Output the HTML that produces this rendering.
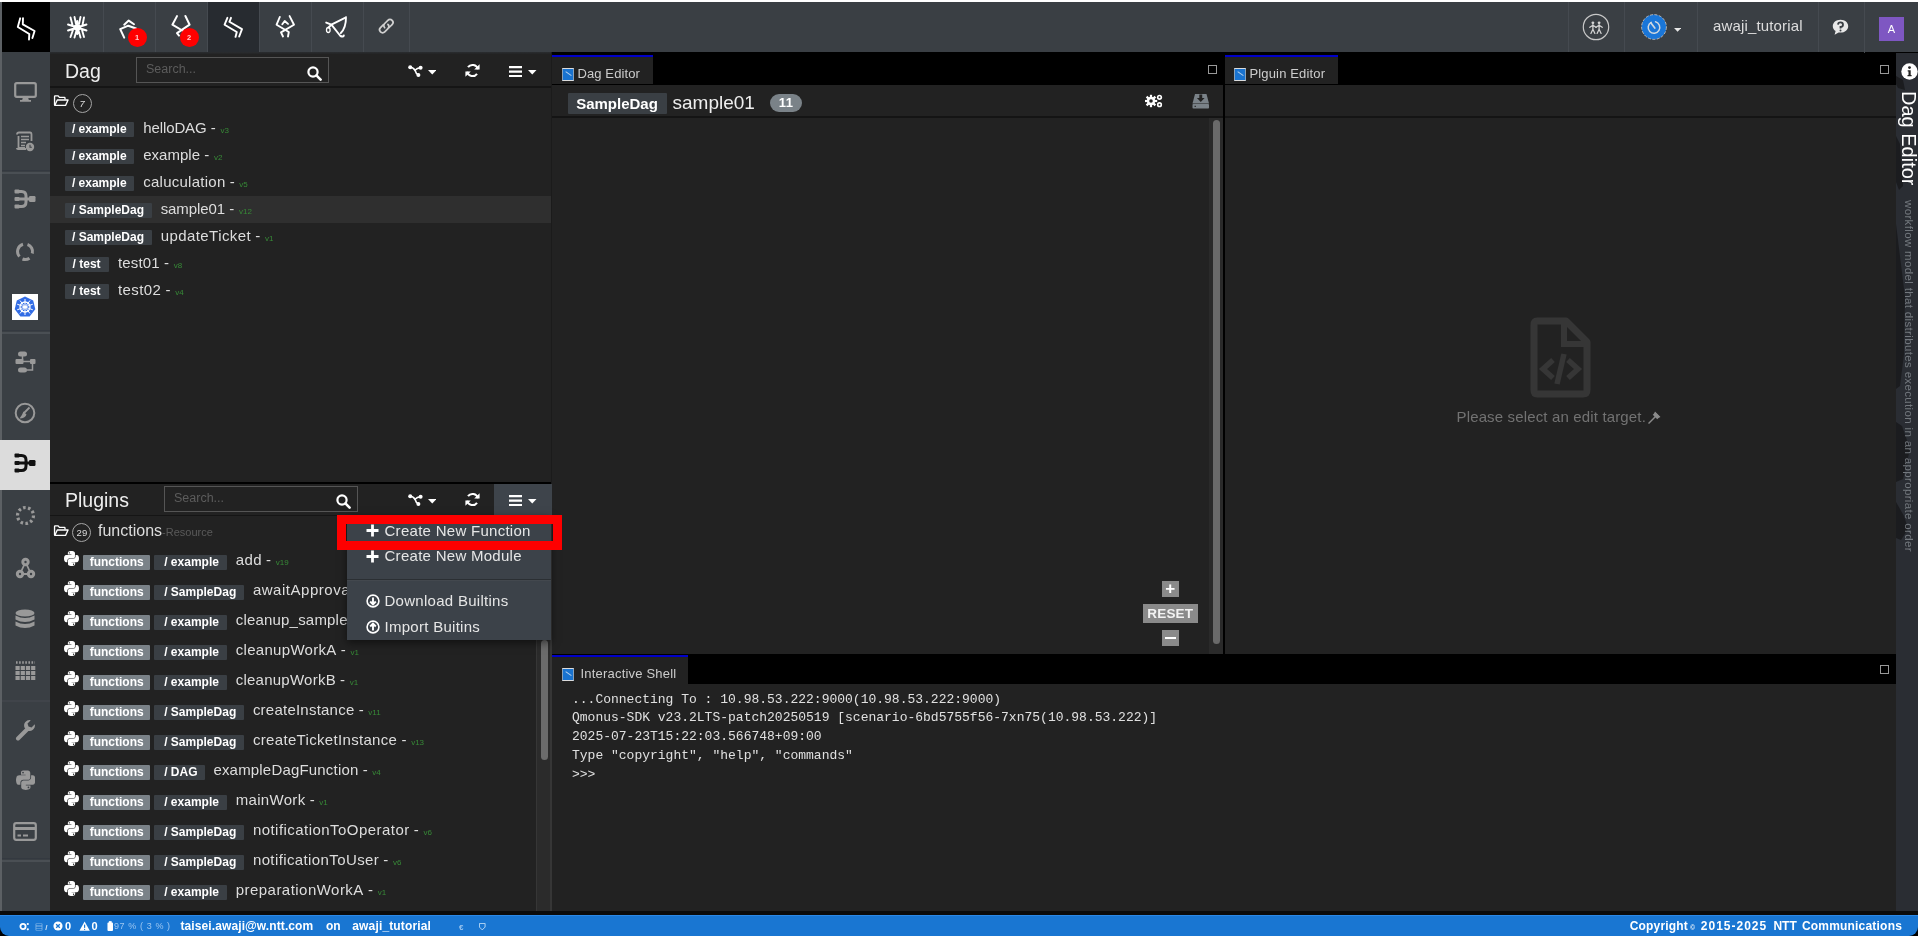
<!DOCTYPE html>
<html lang="en">
<head>
<meta charset="utf-8">
<title>Qmonus SDK - Dag Editor</title>
<style>
*{box-sizing:border-box;margin:0;padding:0}
html,body{width:1920px;height:936px;overflow:hidden;background:#fff;font-family:"Liberation Sans","Noto Sans CJK JP",sans-serif;color:#ddd}
#app{position:absolute;left:0;top:0;width:1920px;height:936px;background:#000;overflow:hidden;will-change:transform}
#app div,#app span.a,#app svg.a,#app pre{position:absolute}
.bw{background:#fff}
#topbar{left:0;top:2px;width:1918px;height:50px;background:#3a3f44}
#logo{left:2px;top:2px;width:48px;height:50px;background:#000}
.tdiv{top:2px;width:1px;height:50px;background:#454a50}
.tact{top:2px;height:50px;background:#272b30}
.badge{width:19px;height:19px;border-radius:50%;background:#f00;color:#ffd0d0;font-size:7.5px;font-weight:bold;text-align:center;line-height:19px}
#side{left:2px;top:52px;width:48px;height:859px;background:#3a3f44}
.sdiv{left:2px;width:48px;height:1px;background:#2f3337}
#sact{left:0;top:440px;width:50px;height:50px;background:#dcdcdc}
.panel{background:#222}
.hline{height:2px;background:#151515}
.ptitle{font-size:19.5px;color:#eee;white-space:nowrap;line-height:24px}
.search{border:1px solid #555;background:#222;color:#5c5c5c;font-size:12.5px;line-height:23px;padding-left:9px;white-space:nowrap}
.lbl{height:15px;background:#3a3f44;color:#fff;font-weight:bold;font-size:12px;line-height:15px;text-align:center;white-space:nowrap;border-radius:1px}
.lblg{background:#7a8288}
.nm{font-size:15px;color:#ddd;white-space:nowrap;line-height:20px}
.ver{font-size:8px;color:#378a37;margin-left:0.5px}
.tab{background:#222;border-top:2.200px solid #0000c8;color:#ccc;font-size:13px;white-space:nowrap}
.tabic{width:12px;height:12px;background:#1973d0;border:1px solid #8aa2ba;border-top-color:#dcdcdc;border-bottom-color:#dcdcdc}
.tabic:after{content:'';position:absolute;left:2px;top:4px;width:6.5px;height:1.3px;background:rgba(232,240,248,.75);transform:rotate(35deg)}
.maxi{width:9px;height:9px;border:1px solid #999}
#status{left:0;top:915px;width:1918px;height:21px;background:#1976d2;border-radius:0 0 9px 9px;border-top:1px solid #2a86e4}
.st{color:#fff;font-size:12px;font-weight:bold;line-height:20px;white-space:nowrap;margin-top:0.800px}
pre{font-family:"Liberation Mono",monospace}
.mi{font-size:15px;color:#e6e6e6;white-space:nowrap;line-height:20px}
</style>
</head>
<body>
<div id="app">
<div style="left:0px;top:2px;width:1918px;height:50px;background:#3a3f44"></div>
<div style="left:0px;top:2px;width:1.6px;height:909px;background:#5c6064"></div>
<div style="left:2px;top:2px;width:48px;height:50px;background:#000"></div>
<div class="tact" style="left:207px;top:2px;width:52px;height:50px;"></div>
<div class="tdiv" style="left:103px;top:2px;width:1px;height:50px;"></div>
<div class="tdiv" style="left:155px;top:2px;width:1px;height:50px;"></div>
<div class="tdiv" style="left:207px;top:2px;width:1px;height:50px;"></div>
<div class="tdiv" style="left:259px;top:2px;width:1px;height:50px;"></div>
<div class="tdiv" style="left:311px;top:2px;width:1px;height:50px;"></div>
<div class="tdiv" style="left:363px;top:2px;width:1px;height:50px;"></div>
<div class="tdiv" style="left:409px;top:2px;width:1px;height:50px;"></div>
<div class="tdiv" style="left:1567.5px;top:2px;width:1px;height:50px;"></div>
<div class="tdiv" style="left:1624.3px;top:2px;width:1px;height:50px;"></div>
<div class="tdiv" style="left:1697px;top:2px;width:1px;height:50px;"></div>
<div class="tdiv" style="left:1817.8px;top:2px;width:1px;height:50px;"></div>
<div class="tdiv" style="left:1864px;top:2px;width:1px;height:54px;"></div>
<svg class="a" style="left:0;top:0" width="420" height="54" viewBox="0 0 420 54"><path d="M20.2 18.3L17.8 27L29.3 34L29 39.5 M23 18.3L22.8 24.3L34.6 31L32.4 38" fill="none" stroke="#fff" stroke-width="1.9" stroke-linecap="round" stroke-linejoin="round" /><path d="M68 24.5L86.5 30.5 M68 30.5L86.5 24.5 M70.500 17.500L72.500 25 M74.500 17L76 24 M80.500 17L79 24 M84 17.500L82.500 25 M70.500 37L73 30 M74.500 37.500L76.500 30.500 M80.500 37.500L78.500 30.500 M84 37L82 30 M77.300 21V34" fill="none" stroke="#fff" stroke-width="1.9" stroke-linecap="round" stroke-linejoin="round" /><ellipse cx="77.3" cy="27.5" rx="4" ry="3" fill="#fff"/><path d="M124.200 24.700L128.700 20.600L134 24.300 M120.200 29.100L128.300 25.700L136 28.500 M120.200 29.100L124.200 37.700" fill="none" stroke="#fff" stroke-width="2.0" stroke-linecap="round" stroke-linejoin="round" /><path d="M177 16.100L172.400 24.700L184 31.500 M185.400 16L189.600 24.700L177 33.200L179 35.600" fill="none" stroke="#fff" stroke-width="2.0" stroke-linecap="round" stroke-linejoin="round" /><path d="M227.400 17.800L224.600 24.700L236.800 32L235.500 36.900 M231 17.800L229.400 21.800L242 29.100L239.200 36.500" fill="none" stroke="#fff" stroke-width="1.9" stroke-linecap="round" stroke-linejoin="round" /><path d="M279.800 17L276.600 24.700L288.800 32L288 36.500 M289.600 16.100L294 24.700L281 32.400L283 36.500 M282.300 24.300L284.700 21L288 23.900" fill="none" stroke="#fff" stroke-width="1.9" stroke-linecap="round" stroke-linejoin="round" /><path d="M346 17.300L331.400 24.700L340.400 36Q343.500 37.300 343.800 35.500 M346 17.300Q346 28 340.800 33 M326.200 22.600L331.400 24.700L328.500 27.500" fill="none" stroke="#fff" stroke-width="1.9" stroke-linecap="round" stroke-linejoin="round" /><ellipse cx="328.3" cy="30" rx="1.800" ry="2.500" fill="none" stroke="#fff" stroke-width="1.300"/><g fill="none" stroke="#d0d0d0" stroke-width="1.700" stroke-linecap="round" transform="translate(386.300 26.100) rotate(-45)"><path d="M-1 -3H-5.200A3 3 0 0 0 -5.200 3H-0.700A3 3 0 0 0 2.300 0"/><path d="M1 3H5.200A3 3 0 0 0 5.200 -3H0.700A3 3 0 0 0 -2.300 0"/></g></svg>
<div class="badge" style="left:127.5px;top:28px;width:19px;height:19px;">1</div>
<div class="badge" style="left:179.5px;top:28px;width:19px;height:19px;">2</div>
<svg class="a" style="left:1582px;top:12.7px;" width="28" height="28" viewBox="0 0 28 28"><circle cx="14" cy="14" r="12.700" fill="none" stroke="#c8c8c8" stroke-width="1.200"/><circle cx="10.9" cy="9.800" r="1.400" fill="#d4d4d4"/><path d="M10.9 11.500V16.200M7.800000000000001 14.300L10.9 12.300L14.0 14.300M8.9 20.400L10.9 16.200L12.9 20.400" fill="none" stroke="#d4d4d4" stroke-width="1.250" stroke-linecap="round" stroke-linejoin="round"/><circle cx="17.1" cy="9.800" r="1.400" fill="#d4d4d4"/><path d="M17.1 11.500V16.200M14.000000000000002 14.300L17.1 12.300L20.200000000000003 14.300M15.100000000000001 20.400L17.1 16.200L19.1 20.400" fill="none" stroke="#d4d4d4" stroke-width="1.250" stroke-linecap="round" stroke-linejoin="round"/></svg>
<svg class="a" style="left:1640px;top:13px;" width="28" height="28" viewBox="0 0 28 28"><circle cx="14" cy="14" r="12.400" fill="#1a76d8" stroke="#d8c8b8" stroke-width="0.800" stroke-dasharray="3 1.500"/><path d="M11.200 9.300A5.800 5.800 0 1 0 15.500 8.800" fill="none" stroke="#d0d8e0" stroke-width="1.500" stroke-linecap="round"/><path d="M14.800 15L10.800 9.800" stroke="#d0d8e0" stroke-width="1.700" fill="none" stroke-linecap="round"/></svg>
<svg class="a" style="left:1674px;top:28px;" width="7.2" height="4.2" viewBox="0 0 8.5 5"><path d="M0 0H8.5L4.250 4.500Z" fill="#e8e8e8"/></svg>
<div style="left:1713px;top:16px;font-size:15px;line-height:20px;color:#ddd;letter-spacing:0.15px;white-space:nowrap">awaji_tutorial</div>
<svg class="a" style="left:1832px;top:19px;" width="17" height="17" viewBox="0 0 17 17"><path d="M8.500 0.800C4 0.800 0.800 3.600 0.800 7.200C0.800 9.200 1.900 11 3.600 12.100L2.600 15.800L6.600 13.400C7.200 13.500 7.800 13.600 8.500 13.600C13 13.600 16.200 10.800 16.200 7.200C16.200 3.600 13 0.800 8.500 0.800Z" fill="#e8e8e8"/><path d="M6 5.600A2.500 2.300 0 1 1 8.500 8V9.600" fill="none" stroke="#3a3f44" stroke-width="1.8"/><circle cx="8.500" cy="11.600" r="1" fill="#3a3f44"/></svg>
<div style="left:1879px;top:17px;width:25px;height:24px;background:#7e57c2;color:#fff;font-size:11px;text-align:center;line-height:25px">A</div>
<div style="left:2px;top:52px;width:48px;height:859px;background:#3a3f44"></div>
<div style="left:1.5px;top:170.2px;width:48.7px;height:1.2px;background:#343940"></div>
<div style="left:1.5px;top:172px;width:48.7px;height:1.5px;background:#4a4f54"></div>
<div style="left:1.5px;top:330.2px;width:48.7px;height:1.2px;background:#343940"></div>
<div style="left:1.5px;top:332px;width:48.7px;height:1.5px;background:#4a4f54"></div>
<div style="left:1.5px;top:858.2px;width:48.7px;height:1.2px;background:#343940"></div>
<div style="left:1.5px;top:860px;width:48.7px;height:1.5px;background:#4a4f54"></div>
<div style="left:1.5px;top:699.5px;width:48.7px;height:2px;background:#40444a"></div>
<div style="left:0px;top:440px;width:50px;height:50px;background:#dcdcdc"></div>
<svg class="a" style="left:13.5px;top:82.0px;" width="23" height="20" viewBox="0 0 23 20"><rect x="1.2" y="1.200" width="20.6" height="13.6" rx="1.500" fill="none" stroke="#999" stroke-width="2.2"/><path d="M9 15h5l0.800 3h-6.600z M6 18h11v1.800H6z" fill="#999"/></svg>
<svg class="a" style="left:15.0px;top:130.5px;" width="20" height="21" viewBox="0 0 20 21"><path d="M3.500 5V17H10" fill="none" stroke="#999" stroke-width="1.8"/><path d="M2 3.500Q2 1.500 4 1.500H15Q16.500 1.500 16.500 3.500V10" fill="none" stroke="#999" stroke-width="1.8"/><path d="M6 5.500H14M6 8.500H14M6 11.500H11M6 14.500H10" stroke="#999" stroke-width="1.5"/><path d="M1 17H11V19H3Q1 19 1 17Z" fill="#999"/><circle cx="15" cy="16" r="4.200" fill="#999"/><path d="M15 13.800V16.200H16.800" stroke="#3a3f44" stroke-width="1.1" fill="none"/></svg>
<svg class="a" style="left:14.0px;top:188.0px;" width="22" height="22" viewBox="0 0 22 22"><g fill="none" stroke="#999" stroke-width="3"><path d="M2 3.500H7.500Q12 3.500 12 8V14Q12 18.500 7.500 18.500H2"/><path d="M2 11H18"/></g><rect x="0.500" y="1.500" width="5" height="4" rx="1" fill="#999"/><rect x="0.500" y="9" width="5" height="4" rx="1" fill="#999"/><rect x="0.500" y="16.500" width="5" height="4" rx="1" fill="#999"/><rect x="15" y="8" width="6.500" height="6" rx="1.200" fill="#999"/></svg>
<svg class="a" style="left:15.0px;top:240.5px;" width="20" height="21" viewBox="0 0 20 21"><g fill="none" stroke="#999" stroke-width="3"><path d="M4.500 15.500A7.500 7.500 0 0 1 8 3.300"/><path d="M12.500 3.500A7.500 7.500 0 0 1 17.300 12.500"/><path d="M14.500 17.200A7.500 7.500 0 0 1 7.500 18"/></g></svg>
<svg class="a" style="left:12.0px;top:293.5px;" width="26" height="26" viewBox="0 0 26 26"><rect width="26" height="26" fill="#fff"/><path d="M13 2.500L21.200 6.400L23.300 15.300L17.600 22.400H8.400L2.700 15.300L4.800 6.400Z" fill="#326ce5"/><circle cx="13" cy="13" r="5" fill="none" stroke="#fff" stroke-width="1.300"/><circle cx="13" cy="13" r="1.600" fill="#fff"/><path d="M13 5V21M5.200 10.200L20.800 15.800M5.200 15.800L20.800 10.200M8 19.500L18 6.500M18 19.500L8 6.500" stroke="#fff" stroke-width="1"/></svg>
<svg class="a" style="left:14.5px;top:350.5px;" width="21" height="22" viewBox="0 0 21 22"><rect x="3" y="0.500" width="9" height="5" rx="2.500" fill="#999"/><rect x="0.500" y="8" width="8" height="5" rx="1" fill="#999"/><rect x="15" y="8" width="5.500" height="5" rx="1" fill="#999"/><rect x="3" y="16.500" width="9" height="5" rx="2.500" fill="#999"/><path d="M7.500 5V9M8 10.500H15M17.500 13V19H12" stroke="#999" stroke-width="1.500" fill="none"/></svg>
<svg class="a" style="left:14.0px;top:402.0px;" width="22" height="22" viewBox="0 0 22 22"><circle cx="11" cy="11" r="9.300" fill="none" stroke="#999" stroke-width="2"/><path d="M15.500 5.500L10 11" stroke="#999" stroke-width="1.800"/><path d="M9.500 9.500L12.500 12.500Q11 16.500 5.500 16.500Q8 13.500 9.500 9.500Z" fill="#999"/></svg>
<svg class="a" style="left:14.0px;top:452.0px;" width="22" height="22" viewBox="0 0 22 22"><g fill="none" stroke="#111" stroke-width="3"><path d="M2 3.500H7.500Q12 3.500 12 8V14Q12 18.500 7.500 18.500H2"/><path d="M2 11H18"/></g><rect x="0.500" y="1.500" width="5" height="4" rx="1" fill="#111"/><rect x="0.500" y="9" width="5" height="4" rx="1" fill="#111"/><rect x="0.500" y="16.500" width="5" height="4" rx="1" fill="#111"/><rect x="15" y="8" width="6.500" height="6" rx="1.200" fill="#111"/></svg>
<svg class="a" style="left:14.5px;top:504.5px;" width="21" height="21" viewBox="0 0 21 21"><circle cx="10.500" cy="10.500" r="8" fill="none" stroke="#999" stroke-width="3.200" stroke-dasharray="2.600 2.400"/></svg>
<svg class="a" style="left:14.5px;top:557.0px;" width="21" height="22" viewBox="0 0 21 22"><path d="M10.500 5L5 17M10.500 5L16 17M5 17H16" stroke="#999" stroke-width="1.800" fill="none"/><circle cx="10.500" cy="5" r="4.200" fill="#999"/><circle cx="5" cy="17" r="4.200" fill="#999"/><circle cx="16" cy="17" r="4.200" fill="#999"/><circle cx="10.500" cy="5" r="1.200" fill="#3a3f44"/><circle cx="5" cy="17" r="1.200" fill="#3a3f44"/><circle cx="16" cy="17" r="1.200" fill="#3a3f44"/></svg>
<svg class="a" style="left:15.0px;top:609.3px;" width="20" height="22" viewBox="0 0 20 22"><ellipse cx="10" cy="4" rx="9.500" ry="3.600" fill="#999"/><path d="M0.500 6.500Q10 11.500 19.500 6.500V10.500Q10 15.500 0.500 10.500Z M0.500 12.500Q10 17.500 19.500 12.500V16.500Q10 21.500 0.500 16.500Z" fill="#999"/></svg>
<svg class="a" style="left:14.5px;top:659.0px;" width="21" height="22" viewBox="0 0 21 22"><path d="M1 3.500H20" stroke="#999" stroke-width="2.400" stroke-dasharray="1.600 1.500"/><rect x="0.5" y="7" width="4.200" height="4" fill="#999"/><rect x="5.7" y="7" width="4.200" height="4" fill="#999"/><rect x="10.9" y="7" width="4.200" height="4" fill="#999"/><rect x="16.1" y="7" width="4.200" height="4" fill="#999"/><rect x="0.5" y="12" width="4.200" height="4" fill="#999"/><rect x="5.7" y="12" width="4.200" height="4" fill="#999"/><rect x="10.9" y="12" width="4.200" height="4" fill="#999"/><rect x="16.1" y="12" width="4.200" height="4" fill="#999"/><rect x="0.5" y="17" width="4.200" height="4" fill="#999"/><rect x="5.7" y="17" width="4.200" height="4" fill="#999"/><rect x="10.9" y="17" width="4.200" height="4" fill="#999"/><rect x="16.1" y="17" width="4.200" height="4" fill="#999"/></svg>
<svg class="a" style="left:14.5px;top:719.0px;" width="21" height="22" viewBox="0 0 21 22"><path d="M3 19.500L12 10.500" stroke="#999" stroke-width="4" stroke-linecap="round"/><path d="M19.800 5.200L16.500 8.500L13.500 7.500L12.500 4.500L15.800 1.200A5.500 5.500 0 0 0 9.600 8.800L12.200 11.400A5.500 5.500 0 0 0 19.800 5.200Z" fill="#999"/></svg>
<svg class="a" style="left:15.5px;top:768.5px;" width="19.5" height="22.285714285714285" viewBox="0 0 448 512"><path d="M439.8 200.5c-7.7-30.900-22.300-54.200-53.400-54.200h-40.100v47.400c0 36.800-31.200 67.800-66.800 67.800H172.700c-29.200 0-53.400 25-53.400 54.300v101.800c0 29 25.200 46 53.400 54.300 33.800 9.900 66.300 11.700 106.800 0 26.900-7.800 53.400-23.500 53.400-54.300v-40.700H226.200v-13.600h160.200c31.100 0 42.600-21.700 53.400-54.200 11.200-33.500 10.700-65.700 0-108.600zM286.200 404c11.100 0 20.100 9.100 20.100 20.300 0 11.300-9 20.400-20.100 20.400-11 0-20.100-9.200-20.100-20.400.1-11.300 9.100-20.300 20.100-20.300zM167.800 248.100h106.800c29.700 0 53.400-24.500 53.400-54.300V91.900c0-29-24.400-50.700-53.400-55.600-35.800-5.900-74.700-5.600-106.800.1-45.200 8-53.400 24.700-53.400 55.600v40.700h106.900v13.600h-147c-31.100 0-58.300 18.700-66.800 54.200-9.800 40.700-10.200 66.100 0 108.600 7.600 31.600 25.700 54.200 56.800 54.200H101v-48.800c0-35.300 30.500-66.400 66.800-66.400zm-6.700-142.600c-11.100 0-20.100-9.100-20.100-20.300.1-11.300 9-20.400 20.100-20.400 11 0 20.100 9.200 20.100 20.400s-9 20.300-20.100 20.300z" fill="#999"/></svg>
<svg class="a" style="left:13.0px;top:822.0px;" width="24" height="19" viewBox="0 0 24 19"><rect x="1.200" y="1.200" width="21.600" height="16.600" rx="2" fill="none" stroke="#999" stroke-width="2.200"/><path d="M1 6.500H23" stroke="#999" stroke-width="3"/><path d="M4.500 13.500H8M10 13.500H15" stroke="#999" stroke-width="2"/></svg>
<div class="panel" style="left:50px;top:52px;width:501.5px;height:429.7px;background:linear-gradient(#2a2d30,#222 2.500px,#222)"></div>
<div class="hline" style="left:50px;top:86.3px;width:501.5px;height:1.7px;"></div>
<div class="ptitle" style="left:65px;top:59px;">Dag</div>
<div class="search" style="left:136px;top:56.8px;width:193px;height:26.4px;">Search...</div>
<svg class="a" style="left:307px;top:65.5px;" width="15" height="15" viewBox="0 0 15 15"><circle cx="6" cy="6" r="4.6" fill="none" stroke="#fff" stroke-width="2.2"/><path d="M9.4 9.4L13.6 13.6" stroke="#fff" stroke-width="2.6" stroke-linecap="round"/></svg>
<svg class="a" style="left:407.8px;top:64.8px;" width="16" height="13" viewBox="0 0 16 13"><g fill="none" stroke="#fff" stroke-width="1.600" stroke-linecap="round"><path d="M2 2.300Q5.500 2.500 7 5.300Q8 8.800 10.200 9.800"/><path d="M7 5.200Q9 3.200 12.500 2.800"/></g><g fill="#fff"><circle cx="2.200" cy="2.300" r="2"/><circle cx="12.600" cy="2.800" r="2"/><circle cx="10.400" cy="9.900" r="2"/></g></svg>
<svg class="a" style="left:427.5px;top:70.0px;" width="8.5" height="5" viewBox="0 0 8.5 5"><path d="M0 0H8.5L4.250 4.500Z" fill="#fff"/></svg>
<svg class="a" style="left:465px;top:63.0px;" width="15" height="15" viewBox="0 0 15 15"><g fill="none" stroke="#fff" stroke-width="2.1"><path d="M12.9 6.2A5.6 5.6 0 0 0 3 4.2"/><path d="M2.1 8.8A5.6 5.6 0 0 0 12 10.8"/></g><path d="M14.6 1.2V6.6H9.2Z M0.4 13.8V8.4H5.8Z" fill="#fff"/></svg>
<svg class="a" style="left:508.7px;top:65.8px;" width="13.5" height="11.2" viewBox="0 0 13.5 11.2"><path d="M0 1.15H13.5M0 5.6H13.5M0 10.05H13.5" stroke="#fff" stroke-width="2.3"/></svg>
<svg class="a" style="left:528px;top:70.0px;" width="8.5" height="5" viewBox="0 0 8.5 5"><path d="M0 0H8.5L4.250 4.500Z" fill="#fff"/></svg>
<svg class="a" style="left:52.8px;top:95px;" width="16.6" height="11.7" viewBox="0 0 17 13"><path d="M1 11V1.6Q1 1 1.6 1H5L6.4 2.6H12Q12.6 2.6 12.6 3.2V5" fill="none" stroke="#fff" stroke-width="1.5" stroke-linejoin="round"/><path d="M1.2 11.6L4 5.6H16L13.2 11.6Z" fill="none" stroke="#fff" stroke-width="1.5" stroke-linejoin="round"/></svg>
<div style="left:72.5px;top:93.6px;width:19.2px;height:19.2px;border:1.200px solid #a4a4a4;border-radius:50%;font-size:9.500px;color:#ddd;text-align:center;line-height:17px;font-style:italic">7</div>
<div style="left:50px;top:196.3px;width:501.5px;height:27.2px;background:#2f2f2f"></div>
<div class="lbl" style="left:64.5px;top:122.3px;width:69.5px;height:14.8px;">/ example</div>
<div class="nm" style="left:143.2px;top:118.1px;"><span style="letter-spacing:-0.1px">helloDAG</span> - <span class="ver">v3</span></div>
<div class="lbl" style="left:64.5px;top:149.29999999999998px;width:69.5px;height:14.8px;">/ example</div>
<div class="nm" style="left:143.2px;top:145.1px;"><span style="letter-spacing:0.029px">example</span> - <span class="ver">v2</span></div>
<div class="lbl" style="left:64.5px;top:176.29999999999998px;width:69.5px;height:14.8px;">/ example</div>
<div class="nm" style="left:143.2px;top:172.1px;"><span style="letter-spacing:0.257px">caluculation</span> - <span class="ver">v5</span></div>
<div class="lbl" style="left:64.5px;top:203.29999999999998px;width:87px;height:14.8px;">/ SampleDag</div>
<div class="nm" style="left:160.7px;top:199.1px;"><span style="letter-spacing:-0.08px">sample01</span> - <span class="ver">v12</span></div>
<div class="lbl" style="left:64.5px;top:230.29999999999998px;width:87px;height:14.8px;">/ SampleDag</div>
<div class="nm" style="left:160.7px;top:226.1px;"><span style="letter-spacing:0.423px">updateTicket</span> - <span class="ver">v1</span></div>
<div class="lbl" style="left:64.5px;top:257.3px;width:44.2px;height:14.8px;">/ test</div>
<div class="nm" style="left:117.9px;top:253.10000000000002px;"><span style="letter-spacing:0.19px">test01</span> - <span class="ver">v8</span></div>
<div class="lbl" style="left:64.5px;top:284.3px;width:44.2px;height:14.8px;">/ test</div>
<div class="nm" style="left:117.9px;top:280.1px;"><span style="letter-spacing:0.44px">test02</span> - <span class="ver">v4</span></div>
<div class="panel" style="left:50px;top:483.7px;width:501.5px;height:427.3px;"></div>
<div class="hline" style="left:50px;top:514.8px;width:501.5px;height:1.7px;"></div>
<div class="ptitle" style="left:65px;top:488px;">Plugins</div>
<div class="search" style="left:164px;top:485.7px;width:193.5px;height:26.2px;">Search...</div>
<svg class="a" style="left:335.5px;top:494px;" width="15" height="15" viewBox="0 0 15 15"><circle cx="6" cy="6" r="4.6" fill="none" stroke="#fff" stroke-width="2.2"/><path d="M9.4 9.4L13.6 13.6" stroke="#fff" stroke-width="2.6" stroke-linecap="round"/></svg>
<svg class="a" style="left:52.8px;top:524.8px;" width="16.6" height="11.7" viewBox="0 0 17 13"><path d="M1 11V1.6Q1 1 1.6 1H5L6.4 2.6H12Q12.6 2.6 12.6 3.2V5" fill="none" stroke="#fff" stroke-width="1.5" stroke-linejoin="round"/><path d="M1.2 11.6L4 5.6H16L13.2 11.6Z" fill="none" stroke="#fff" stroke-width="1.5" stroke-linejoin="round"/></svg>
<div style="left:72.3px;top:522.6px;width:19.2px;height:19.2px;border:1.200px solid #a4a4a4;border-radius:50%;font-size:9.500px;color:#ddd;text-align:center;line-height:17.500px">29</div>
<div class="nm" style="left:98px;top:520.6px;"><span style="font-size:16px">functions</span><span style="font-size:11px;color:#5a5a5a">-Resource</span></div>
<svg class="a" style="left:64px;top:550.2px;" width="15" height="17.142857142857142" viewBox="0 0 448 512"><path d="M439.8 200.5c-7.7-30.900-22.300-54.200-53.400-54.200h-40.100v47.400c0 36.800-31.200 67.800-66.800 67.800H172.700c-29.200 0-53.400 25-53.400 54.300v101.800c0 29 25.200 46 53.400 54.300 33.800 9.900 66.300 11.700 106.800 0 26.900-7.800 53.400-23.500 53.400-54.300v-40.700H226.200v-13.600h160.200c31.100 0 42.600-21.700 53.400-54.200 11.200-33.500 10.700-65.700 0-108.600zM286.200 404c11.100 0 20.100 9.100 20.100 20.300 0 11.300-9 20.400-20.100 20.400-11 0-20.100-9.200-20.100-20.400.1-11.300 9.100-20.300 20.100-20.300zM167.800 248.100h106.800c29.700 0 53.400-24.500 53.400-54.300V91.900c0-29-24.400-50.700-53.400-55.600-35.800-5.900-74.700-5.600-106.800.1-45.200 8-53.400 24.700-53.400 55.600v40.700h106.900v13.600h-147c-31.100 0-58.300 18.700-66.800 54.200-9.800 40.700-10.200 66.100 0 108.600 7.600 31.600 25.700 54.200 56.800 54.200H101v-48.800c0-35.300 30.500-66.400 66.800-66.400zm-6.700-142.600c-11.100 0-20.100-9.100-20.100-20.300.1-11.300 9-20.400 20.100-20.400 11 0 20.100 9.200 20.100 20.400s-9 20.300-20.100 20.300z" fill="#fff"/></svg>
<div class="lbl lblg" style="left:83.3px;top:555.0px;width:66.7px;height:15px;">functions</div>
<div class="lbl" style="left:154.2px;top:555.0px;width:72.8px;height:15px;text-align:left;padding-left:10px">/ example</div>
<div class="nm" style="left:235.7px;top:550.0px;"><span style="letter-spacing:0.391px">add</span> - <span class="ver">v19</span></div>
<svg class="a" style="left:64px;top:580.2px;" width="15" height="17.142857142857142" viewBox="0 0 448 512"><path d="M439.8 200.5c-7.7-30.900-22.300-54.200-53.400-54.200h-40.100v47.400c0 36.800-31.200 67.800-66.800 67.800H172.700c-29.200 0-53.400 25-53.400 54.300v101.800c0 29 25.200 46 53.400 54.300 33.800 9.900 66.300 11.700 106.800 0 26.900-7.800 53.400-23.500 53.400-54.300v-40.700H226.200v-13.600h160.200c31.100 0 42.600-21.700 53.400-54.200 11.200-33.500 10.700-65.700 0-108.600zM286.200 404c11.100 0 20.100 9.100 20.100 20.300 0 11.300-9 20.400-20.100 20.400-11 0-20.100-9.200-20.100-20.400.1-11.300 9.100-20.300 20.100-20.300zM167.800 248.100h106.800c29.700 0 53.400-24.500 53.400-54.300V91.900c0-29-24.400-50.700-53.400-55.600-35.800-5.900-74.700-5.600-106.800.1-45.200 8-53.400 24.700-53.400 55.600v40.700h106.900v13.600h-147c-31.100 0-58.300 18.700-66.800 54.200-9.800 40.700-10.200 66.100 0 108.600 7.600 31.600 25.700 54.200 56.800 54.200H101v-48.800c0-35.300 30.500-66.400 66.800-66.400zm-6.700-142.600c-11.100 0-20.100-9.100-20.100-20.300.1-11.300 9-20.400 20.100-20.400 11 0 20.100 9.200 20.100 20.400s-9 20.300-20.100 20.300z" fill="#fff"/></svg>
<div class="lbl lblg" style="left:83.3px;top:585.0px;width:66.7px;height:15px;">functions</div>
<div class="lbl" style="left:154.2px;top:585.0px;width:90px;height:15px;text-align:left;padding-left:10px">/ SampleDag</div>
<div class="nm" style="left:252.89999999999998px;top:580.0px;"><span style="letter-spacing:0.521px">awaitApproval</span> - <span class="ver">v1</span></div>
<svg class="a" style="left:64px;top:610.2px;" width="15" height="17.142857142857142" viewBox="0 0 448 512"><path d="M439.8 200.5c-7.7-30.900-22.300-54.200-53.400-54.200h-40.100v47.400c0 36.800-31.200 67.800-66.800 67.800H172.700c-29.200 0-53.400 25-53.400 54.300v101.800c0 29 25.200 46 53.400 54.300 33.800 9.900 66.300 11.700 106.800 0 26.900-7.800 53.400-23.500 53.400-54.300v-40.700H226.200v-13.600h160.200c31.100 0 42.600-21.700 53.400-54.200 11.200-33.500 10.700-65.700 0-108.600zM286.200 404c11.100 0 20.100 9.100 20.100 20.300 0 11.300-9 20.400-20.100 20.400-11 0-20.100-9.200-20.100-20.400.1-11.300 9.100-20.300 20.100-20.300zM167.800 248.100h106.800c29.700 0 53.400-24.500 53.400-54.300V91.900c0-29-24.400-50.700-53.400-55.600-35.800-5.900-74.700-5.600-106.800.1-45.200 8-53.400 24.700-53.400 55.600v40.700h106.900v13.600h-147c-31.100 0-58.300 18.700-66.800 54.200-9.800 40.700-10.200 66.100 0 108.600 7.600 31.600 25.700 54.200 56.800 54.200H101v-48.800c0-35.300 30.500-66.400 66.800-66.400zm-6.700-142.600c-11.100 0-20.100-9.100-20.100-20.300.1-11.300 9-20.400 20.100-20.400 11 0 20.100 9.200 20.100 20.400s-9 20.300-20.100 20.300z" fill="#fff"/></svg>
<div class="lbl lblg" style="left:83.3px;top:615.0px;width:66.7px;height:15px;">functions</div>
<div class="lbl" style="left:154.2px;top:615.0px;width:72.8px;height:15px;text-align:left;padding-left:10px">/ example</div>
<div class="nm" style="left:235.7px;top:610.0px;"><span style="letter-spacing:0.197px">cleanup_sample</span> - <span class="ver">v1</span></div>
<svg class="a" style="left:64px;top:640.2px;" width="15" height="17.142857142857142" viewBox="0 0 448 512"><path d="M439.8 200.5c-7.7-30.900-22.300-54.200-53.400-54.200h-40.100v47.400c0 36.800-31.200 67.800-66.800 67.800H172.700c-29.200 0-53.400 25-53.400 54.300v101.800c0 29 25.200 46 53.400 54.300 33.800 9.900 66.300 11.700 106.800 0 26.900-7.800 53.400-23.500 53.400-54.300v-40.700H226.200v-13.600h160.200c31.100 0 42.600-21.700 53.400-54.200 11.200-33.500 10.700-65.700 0-108.600zM286.200 404c11.100 0 20.100 9.100 20.100 20.300 0 11.300-9 20.400-20.100 20.400-11 0-20.100-9.200-20.100-20.400.1-11.300 9.100-20.300 20.100-20.300zM167.800 248.100h106.800c29.700 0 53.400-24.500 53.400-54.300V91.900c0-29-24.400-50.700-53.400-55.600-35.800-5.900-74.700-5.600-106.800.1-45.200 8-53.400 24.700-53.400 55.600v40.700h106.900v13.600h-147c-31.100 0-58.300 18.700-66.800 54.200-9.800 40.700-10.200 66.100 0 108.600 7.600 31.600 25.700 54.200 56.800 54.200H101v-48.800c0-35.300 30.500-66.400 66.800-66.400zm-6.700-142.600c-11.100 0-20.100-9.100-20.100-20.300.1-11.300 9-20.400 20.100-20.400 11 0 20.100 9.200 20.100 20.400s-9 20.300-20.100 20.300z" fill="#fff"/></svg>
<div class="lbl lblg" style="left:83.3px;top:645.0px;width:66.7px;height:15px;">functions</div>
<div class="lbl" style="left:154.2px;top:645.0px;width:72.8px;height:15px;text-align:left;padding-left:10px">/ example</div>
<div class="nm" style="left:235.7px;top:640.0px;"><span style="letter-spacing:0.31px">cleanupWorkA</span> - <span class="ver">v1</span></div>
<svg class="a" style="left:64px;top:670.2px;" width="15" height="17.142857142857142" viewBox="0 0 448 512"><path d="M439.8 200.5c-7.7-30.900-22.300-54.200-53.400-54.200h-40.100v47.400c0 36.800-31.200 67.800-66.800 67.800H172.700c-29.200 0-53.400 25-53.400 54.300v101.800c0 29 25.200 46 53.400 54.300 33.800 9.900 66.300 11.700 106.800 0 26.900-7.800 53.400-23.500 53.400-54.300v-40.700H226.200v-13.600h160.200c31.100 0 42.600-21.700 53.400-54.200 11.200-33.500 10.700-65.700 0-108.600zM286.200 404c11.100 0 20.100 9.100 20.100 20.300 0 11.300-9 20.400-20.100 20.400-11 0-20.100-9.200-20.100-20.400.1-11.300 9.100-20.300 20.100-20.300zM167.800 248.100h106.800c29.700 0 53.400-24.500 53.400-54.300V91.900c0-29-24.400-50.700-53.400-55.600-35.800-5.900-74.700-5.600-106.800.1-45.200 8-53.400 24.700-53.400 55.600v40.700h106.900v13.600h-147c-31.100 0-58.300 18.700-66.800 54.200-9.800 40.700-10.200 66.100 0 108.600 7.600 31.600 25.700 54.200 56.800 54.200H101v-48.800c0-35.300 30.500-66.400 66.800-66.400zm-6.700-142.600c-11.100 0-20.100-9.100-20.100-20.300.1-11.300 9-20.400 20.100-20.400 11 0 20.100 9.200 20.100 20.400s-9 20.300-20.100 20.300z" fill="#fff"/></svg>
<div class="lbl lblg" style="left:83.3px;top:675.0px;width:66.7px;height:15px;">functions</div>
<div class="lbl" style="left:154.2px;top:675.0px;width:72.8px;height:15px;text-align:left;padding-left:10px">/ example</div>
<div class="nm" style="left:235.7px;top:670.0px;"><span style="letter-spacing:0.244px">cleanupWorkB</span> - <span class="ver">v1</span></div>
<svg class="a" style="left:64px;top:700.2px;" width="15" height="17.142857142857142" viewBox="0 0 448 512"><path d="M439.8 200.5c-7.7-30.900-22.300-54.200-53.400-54.200h-40.100v47.400c0 36.800-31.200 67.800-66.800 67.800H172.700c-29.200 0-53.400 25-53.400 54.300v101.800c0 29 25.200 46 53.400 54.300 33.800 9.900 66.300 11.700 106.800 0 26.900-7.800 53.400-23.500 53.400-54.300v-40.700H226.200v-13.600h160.200c31.100 0 42.600-21.700 53.400-54.200 11.200-33.500 10.700-65.700 0-108.600zM286.200 404c11.100 0 20.100 9.100 20.100 20.300 0 11.300-9 20.400-20.100 20.400-11 0-20.100-9.200-20.100-20.400.1-11.300 9.100-20.300 20.100-20.300zM167.800 248.100h106.800c29.700 0 53.400-24.500 53.400-54.300V91.900c0-29-24.400-50.700-53.400-55.600-35.800-5.900-74.700-5.600-106.800.1-45.200 8-53.400 24.700-53.400 55.600v40.700h106.900v13.600h-147c-31.100 0-58.300 18.700-66.800 54.200-9.800 40.700-10.200 66.100 0 108.600 7.600 31.600 25.700 54.200 56.800 54.200H101v-48.800c0-35.300 30.500-66.400 66.800-66.400zm-6.700-142.600c-11.100 0-20.100-9.100-20.100-20.300.1-11.300 9-20.400 20.100-20.400 11 0 20.100 9.200 20.100 20.400s-9 20.300-20.100 20.300z" fill="#fff"/></svg>
<div class="lbl lblg" style="left:83.3px;top:705.0px;width:66.7px;height:15px;">functions</div>
<div class="lbl" style="left:154.2px;top:705.0px;width:90px;height:15px;text-align:left;padding-left:10px">/ SampleDag</div>
<div class="nm" style="left:252.89999999999998px;top:700.0px;"><span style="letter-spacing:0.229px">createInstance</span> - <span class="ver">v11</span></div>
<svg class="a" style="left:64px;top:730.2px;" width="15" height="17.142857142857142" viewBox="0 0 448 512"><path d="M439.8 200.5c-7.7-30.900-22.300-54.200-53.400-54.200h-40.100v47.400c0 36.800-31.200 67.800-66.800 67.800H172.700c-29.200 0-53.400 25-53.400 54.300v101.800c0 29 25.200 46 53.400 54.300 33.800 9.900 66.300 11.700 106.800 0 26.900-7.800 53.400-23.500 53.400-54.300v-40.700H226.200v-13.600h160.200c31.100 0 42.600-21.700 53.400-54.200 11.200-33.500 10.700-65.700 0-108.600zM286.200 404c11.100 0 20.100 9.100 20.100 20.300 0 11.300-9 20.400-20.100 20.400-11 0-20.100-9.200-20.100-20.400.1-11.300 9.100-20.300 20.100-20.300zM167.800 248.100h106.800c29.700 0 53.400-24.500 53.400-54.300V91.900c0-29-24.400-50.700-53.400-55.600-35.800-5.900-74.700-5.600-106.800.1-45.200 8-53.400 24.700-53.400 55.600v40.700h106.900v13.600h-147c-31.100 0-58.300 18.700-66.800 54.200-9.800 40.700-10.200 66.100 0 108.600 7.600 31.600 25.700 54.200 56.800 54.200H101v-48.800c0-35.300 30.500-66.400 66.800-66.400zm-6.700-142.600c-11.100 0-20.100-9.100-20.100-20.300.1-11.300 9-20.400 20.100-20.400 11 0 20.100 9.200 20.100 20.400s-9 20.300-20.100 20.300z" fill="#fff"/></svg>
<div class="lbl lblg" style="left:83.3px;top:735.0px;width:66.7px;height:15px;">functions</div>
<div class="lbl" style="left:154.2px;top:735.0px;width:90px;height:15px;text-align:left;padding-left:10px">/ SampleDag</div>
<div class="nm" style="left:252.89999999999998px;top:730.0px;"><span style="letter-spacing:0.328px">createTicketInstance</span> - <span class="ver">v13</span></div>
<svg class="a" style="left:64px;top:760.2px;" width="15" height="17.142857142857142" viewBox="0 0 448 512"><path d="M439.8 200.5c-7.7-30.900-22.300-54.200-53.400-54.200h-40.100v47.400c0 36.800-31.200 67.800-66.800 67.800H172.700c-29.200 0-53.400 25-53.400 54.300v101.800c0 29 25.200 46 53.400 54.300 33.800 9.900 66.300 11.700 106.800 0 26.900-7.800 53.400-23.500 53.400-54.300v-40.700H226.200v-13.600h160.200c31.100 0 42.600-21.700 53.400-54.200 11.200-33.500 10.700-65.700 0-108.600zM286.200 404c11.100 0 20.100 9.100 20.100 20.300 0 11.300-9 20.400-20.100 20.400-11 0-20.100-9.200-20.100-20.400.1-11.300 9.100-20.300 20.100-20.300zM167.800 248.100h106.800c29.700 0 53.400-24.500 53.400-54.300V91.900c0-29-24.400-50.700-53.400-55.600-35.800-5.900-74.700-5.600-106.800.1-45.200 8-53.400 24.700-53.400 55.600v40.700h106.900v13.600h-147c-31.100 0-58.300 18.700-66.800 54.200-9.800 40.700-10.200 66.100 0 108.600 7.600 31.600 25.700 54.200 56.800 54.200H101v-48.800c0-35.300 30.500-66.400 66.800-66.400zm-6.700-142.600c-11.100 0-20.100-9.100-20.100-20.300.1-11.300 9-20.400 20.100-20.400 11 0 20.100 9.200 20.100 20.400s-9 20.300-20.100 20.300z" fill="#fff"/></svg>
<div class="lbl lblg" style="left:83.3px;top:765.0px;width:66.7px;height:15px;">functions</div>
<div class="lbl" style="left:154.2px;top:765.0px;width:50.5px;height:15px;text-align:left;padding-left:10px">/ DAG</div>
<div class="nm" style="left:213.39999999999998px;top:760.0px;"><span style="letter-spacing:0.186px">exampleDagFunction</span> - <span class="ver">v4</span></div>
<svg class="a" style="left:64px;top:790.2px;" width="15" height="17.142857142857142" viewBox="0 0 448 512"><path d="M439.8 200.5c-7.7-30.900-22.300-54.200-53.400-54.200h-40.100v47.400c0 36.800-31.200 67.800-66.800 67.800H172.700c-29.200 0-53.400 25-53.400 54.300v101.800c0 29 25.200 46 53.400 54.300 33.800 9.900 66.300 11.700 106.800 0 26.900-7.800 53.400-23.500 53.400-54.300v-40.700H226.200v-13.600h160.200c31.100 0 42.600-21.700 53.400-54.200 11.200-33.500 10.700-65.700 0-108.600zM286.200 404c11.100 0 20.100 9.100 20.100 20.300 0 11.300-9 20.400-20.100 20.400-11 0-20.100-9.200-20.100-20.400.1-11.300 9.100-20.300 20.100-20.300zM167.800 248.100h106.800c29.700 0 53.400-24.500 53.400-54.300V91.900c0-29-24.400-50.700-53.400-55.600-35.800-5.900-74.700-5.600-106.800.1-45.200 8-53.400 24.700-53.400 55.600v40.700h106.900v13.600h-147c-31.100 0-58.300 18.700-66.800 54.200-9.800 40.700-10.200 66.100 0 108.600 7.600 31.600 25.700 54.200 56.800 54.200H101v-48.800c0-35.300 30.500-66.400 66.800-66.400zm-6.700-142.600c-11.100 0-20.100-9.100-20.100-20.300.1-11.300 9-20.400 20.100-20.400 11 0 20.100 9.200 20.100 20.400s-9 20.300-20.100 20.300z" fill="#fff"/></svg>
<div class="lbl lblg" style="left:83.3px;top:795.0px;width:66.7px;height:15px;">functions</div>
<div class="lbl" style="left:154.2px;top:795.0px;width:72.8px;height:15px;text-align:left;padding-left:10px">/ example</div>
<div class="nm" style="left:235.7px;top:790.0px;"><span style="letter-spacing:0.32px">mainWork</span> - <span class="ver">v1</span></div>
<svg class="a" style="left:64px;top:820.2px;" width="15" height="17.142857142857142" viewBox="0 0 448 512"><path d="M439.8 200.5c-7.7-30.900-22.300-54.200-53.400-54.200h-40.100v47.400c0 36.800-31.200 67.800-66.800 67.800H172.700c-29.200 0-53.400 25-53.400 54.300v101.800c0 29 25.200 46 53.400 54.300 33.800 9.900 66.300 11.700 106.800 0 26.900-7.800 53.400-23.500 53.400-54.300v-40.700H226.200v-13.600h160.200c31.100 0 42.600-21.700 53.400-54.200 11.200-33.500 10.700-65.700 0-108.600zM286.200 404c11.100 0 20.100 9.100 20.100 20.300 0 11.300-9 20.400-20.100 20.400-11 0-20.100-9.200-20.100-20.400.1-11.300 9.100-20.300 20.100-20.300zM167.800 248.100h106.800c29.700 0 53.400-24.500 53.400-54.300V91.900c0-29-24.400-50.700-53.400-55.600-35.800-5.900-74.700-5.600-106.800.1-45.200 8-53.400 24.700-53.400 55.600v40.700h106.900v13.600h-147c-31.100 0-58.300 18.700-66.800 54.200-9.800 40.700-10.200 66.100 0 108.600 7.600 31.600 25.700 54.200 56.800 54.200H101v-48.800c0-35.300 30.500-66.400 66.800-66.400zm-6.700-142.600c-11.100 0-20.100-9.100-20.100-20.300.1-11.300 9-20.400 20.100-20.400 11 0 20.100 9.200 20.100 20.400s-9 20.300-20.100 20.300z" fill="#fff"/></svg>
<div class="lbl lblg" style="left:83.3px;top:825.0px;width:66.7px;height:15px;">functions</div>
<div class="lbl" style="left:154.2px;top:825.0px;width:90px;height:15px;text-align:left;padding-left:10px">/ SampleDag</div>
<div class="nm" style="left:252.89999999999998px;top:820.0px;"><span style="letter-spacing:0.457px">notificationToOperator</span> - <span class="ver">v6</span></div>
<svg class="a" style="left:64px;top:850.2px;" width="15" height="17.142857142857142" viewBox="0 0 448 512"><path d="M439.8 200.5c-7.7-30.900-22.300-54.200-53.400-54.200h-40.100v47.400c0 36.800-31.200 67.800-66.800 67.800H172.700c-29.200 0-53.400 25-53.400 54.300v101.800c0 29 25.200 46 53.400 54.300 33.800 9.900 66.300 11.700 106.800 0 26.900-7.800 53.400-23.500 53.400-54.300v-40.700H226.200v-13.600h160.200c31.100 0 42.600-21.700 53.400-54.200 11.200-33.500 10.700-65.700 0-108.600zM286.200 404c11.100 0 20.100 9.100 20.100 20.300 0 11.300-9 20.400-20.100 20.400-11 0-20.100-9.200-20.100-20.400.1-11.300 9.100-20.300 20.100-20.300zM167.800 248.100h106.800c29.700 0 53.400-24.500 53.400-54.300V91.900c0-29-24.400-50.700-53.400-55.600-35.800-5.900-74.700-5.600-106.800.1-45.200 8-53.400 24.700-53.400 55.600v40.700h106.900v13.600h-147c-31.100 0-58.300 18.700-66.800 54.200-9.800 40.700-10.200 66.100 0 108.600 7.600 31.600 25.700 54.200 56.800 54.200H101v-48.800c0-35.300 30.500-66.400 66.800-66.400zm-6.700-142.600c-11.100 0-20.100-9.100-20.100-20.300.1-11.300 9-20.400 20.100-20.400 11 0 20.100 9.200 20.100 20.400s-9 20.300-20.100 20.300z" fill="#fff"/></svg>
<div class="lbl lblg" style="left:83.3px;top:855.0px;width:66.7px;height:15px;">functions</div>
<div class="lbl" style="left:154.2px;top:855.0px;width:90px;height:15px;text-align:left;padding-left:10px">/ SampleDag</div>
<div class="nm" style="left:252.89999999999998px;top:850.0px;"><span style="letter-spacing:0.393px">notificationToUser</span> - <span class="ver">v6</span></div>
<svg class="a" style="left:64px;top:880.2px;" width="15" height="17.142857142857142" viewBox="0 0 448 512"><path d="M439.8 200.5c-7.7-30.900-22.300-54.200-53.400-54.200h-40.100v47.400c0 36.800-31.200 67.800-66.800 67.800H172.700c-29.200 0-53.400 25-53.400 54.300v101.800c0 29 25.200 46 53.400 54.300 33.800 9.900 66.300 11.700 106.800 0 26.900-7.800 53.400-23.500 53.400-54.300v-40.700H226.200v-13.600h160.200c31.100 0 42.600-21.700 53.400-54.200 11.200-33.500 10.700-65.700 0-108.600zM286.200 404c11.100 0 20.100 9.100 20.100 20.300 0 11.300-9 20.400-20.100 20.400-11 0-20.100-9.200-20.100-20.400.1-11.300 9.100-20.300 20.100-20.300zM167.800 248.100h106.800c29.700 0 53.400-24.500 53.400-54.300V91.900c0-29-24.400-50.700-53.400-55.600-35.800-5.900-74.700-5.600-106.800.1-45.200 8-53.400 24.700-53.400 55.600v40.700h106.900v13.600h-147c-31.100 0-58.300 18.700-66.800 54.200-9.800 40.700-10.200 66.100 0 108.600 7.600 31.600 25.700 54.200 56.800 54.200H101v-48.800c0-35.300 30.500-66.400 66.800-66.400zm-6.700-142.600c-11.100 0-20.100-9.100-20.100-20.300.1-11.300 9-20.400 20.100-20.400 11 0 20.100 9.200 20.100 20.400s-9 20.300-20.100 20.300z" fill="#fff"/></svg>
<div class="lbl lblg" style="left:83.3px;top:885.0px;width:66.7px;height:15px;">functions</div>
<div class="lbl" style="left:154.2px;top:885.0px;width:72.8px;height:15px;text-align:left;padding-left:10px">/ example</div>
<div class="nm" style="left:235.7px;top:880.0px;"><span style="letter-spacing:0.468px">preparationWorkA</span> - <span class="ver">v1</span></div>
<div style="left:535.7px;top:516.5px;width:16px;height:394.5px;background:#2b2b2b;border-left:1.500px solid #363636;border-right:2px solid #363636"></div>
<div style="left:540.7px;top:640px;width:7.8px;height:120px;background:#6b6b6b;border-radius:4px"></div>
<div style="left:550.5px;top:52px;width:1.7px;height:464.5px;background:#1b1b1b"></div>
<div style="left:493.6px;top:483.7px;width:58.3px;height:31.3px;background:#3e444b"></div>
<svg class="a" style="left:407.8px;top:493.8px;" width="16" height="13" viewBox="0 0 16 13"><g fill="none" stroke="#fff" stroke-width="1.600" stroke-linecap="round"><path d="M2 2.300Q5.500 2.500 7 5.300Q8 8.800 10.200 9.800"/><path d="M7 5.200Q9 3.200 12.500 2.800"/></g><g fill="#fff"><circle cx="2.200" cy="2.300" r="2"/><circle cx="12.600" cy="2.800" r="2"/><circle cx="10.400" cy="9.900" r="2"/></g></svg>
<svg class="a" style="left:427.5px;top:499.0px;" width="8.5" height="5" viewBox="0 0 8.5 5"><path d="M0 0H8.5L4.250 4.500Z" fill="#fff"/></svg>
<svg class="a" style="left:465px;top:492.0px;" width="15" height="15" viewBox="0 0 15 15"><g fill="none" stroke="#fff" stroke-width="2.1"><path d="M12.9 6.2A5.6 5.6 0 0 0 3 4.2"/><path d="M2.1 8.8A5.6 5.6 0 0 0 12 10.8"/></g><path d="M14.6 1.2V6.6H9.2Z M0.4 13.8V8.4H5.8Z" fill="#fff"/></svg>
<svg class="a" style="left:508.7px;top:494.8px;" width="13.5" height="11.2" viewBox="0 0 13.5 11.2"><path d="M0 1.15H13.5M0 5.6H13.5M0 10.05H13.5" stroke="#fff" stroke-width="2.3"/></svg>
<svg class="a" style="left:528px;top:499.0px;" width="8.5" height="5" viewBox="0 0 8.5 5"><path d="M0 0H8.5L4.250 4.500Z" fill="#fff"/></svg>
<div style="left:552px;top:52.8px;width:671px;height:31.7px;background:#000"></div>
<div class="tab" style="left:552px;top:54.8px;width:100.5px;height:29.7px;"></div>
<div class="tabic" style="left:562.3px;top:68px;width:11.7px;height:13px;"></div>
<div style="left:577.5px;top:66px;font-size:13px;color:#ccc;line-height:16px;white-space:nowrap;letter-spacing:0.1px">Dag Editor</div>
<div class="maxi" style="left:1207.5px;top:64.5px;width:9.5px;height:9.5px;"></div>
<div class="panel" style="left:552px;top:84.5px;width:671px;height:569.5px;"></div>
<div style="left:552px;top:116.3px;width:671px;height:1.5px;background:#141414"></div>
<div style="left:567.5px;top:93px;width:99px;height:21px;background:#3a3f44;color:#fff;font-weight:bold;font-size:15px;line-height:21px;text-align:center;white-space:nowrap;border-radius:1px">SampleDag</div>
<div style="left:672.5px;top:90.6px;font-size:19px;line-height:24px;color:#eee;white-space:nowrap">sample01</div>
<div style="left:770px;top:93.9px;width:32px;height:18px;background:#7a8288;border-radius:9px;color:#fff;font-weight:bold;font-size:13px;line-height:18px;text-align:center;letter-spacing:0.5px">11</div>
<svg class="a" style="left:1144.5px;top:94px;" width="18.5" height="14" viewBox="0 0 18.5 14"><g fill="#fff"><circle cx="6" cy="7" r="4.200"/><rect x="4.900" y="0.800" width="2.200" height="12.400" transform="rotate(0 6 7)"/><rect x="4.900" y="0.800" width="2.200" height="12.400" transform="rotate(45 6 7)"/><rect x="4.900" y="0.800" width="2.200" height="12.400" transform="rotate(90 6 7)"/><rect x="4.900" y="0.800" width="2.200" height="12.400" transform="rotate(135 6 7)"/><circle cx="14.500" cy="3.300" r="2.600"/><circle cx="14.500" cy="10.700" r="2.600"/></g><circle cx="6" cy="7" r="1.800" fill="#222"/><circle cx="14.500" cy="3.300" r="1" fill="#222"/><circle cx="14.500" cy="10.700" r="1" fill="#222"/></svg>
<svg class="a" style="left:1192px;top:92.5px;" width="17.5" height="16" viewBox="0 0 17.5 16"><g fill="#7a8288"><path d="M3 1H14.500L17 10.500H0.500Z"/><rect x="0.500" y="11" width="16.500" height="4.600" rx="0.800"/></g><path d="M7.300 1.500H10.200V5H12.600L8.750 9L4.900 5H7.300Z" fill="#222"/><path d="M2.500 13.300H4" stroke="#222" stroke-width="1"/></svg>
<div style="left:1209px;top:117.5px;width:14px;height:536.5px;background:#2a2a2a"></div>
<div style="left:1212.5px;top:120px;width:7.5px;height:524px;background:#6a6a6a;border-radius:4px"></div>
<div style="left:1161.5px;top:581px;width:17.5px;height:16px;background:#8a8a8a;color:#fff;font-weight:bold;font-size:17px;line-height:15px;text-align:center">+</div>
<div style="left:1142.5px;top:603.5px;width:55.5px;height:19px;background:#8a8a8a;color:#f2f2f2;font-weight:bold;font-size:13.500px;line-height:19px;text-align:center;letter-spacing:0.200px">RESET</div>
<div style="left:1161.5px;top:630px;width:17.5px;height:16px;background:#8a8a8a"></div>
<div style="left:1165px;top:636.5px;width:10.5px;height:2.5px;background:#fff"></div>
<div style="left:1223px;top:52.5px;width:673px;height:32px;background:#000"></div>
<div class="tab" style="left:1225px;top:54.8px;width:112.5px;height:29.7px;"></div>
<div class="tabic" style="left:1234.3px;top:68px;width:11.7px;height:13px;"></div>
<div style="left:1249.5px;top:66px;font-size:13px;color:#ccc;line-height:16px;white-space:nowrap;letter-spacing:0.150px">Plguin Editor</div>
<div class="maxi" style="left:1879.5px;top:65px;width:9px;height:9px;"></div>
<div class="panel" style="left:1225px;top:84.5px;width:671px;height:569.5px;"></div>
<div style="left:1225px;top:116.3px;width:671px;height:1.5px;background:#141414"></div>
<svg class="a" style="left:1530px;top:316.5px;" width="61" height="81" viewBox="0 0 61 81"><path d="M7 4H36L57 25V73Q57 77 53 77H7Q4 77 4 73V8Q4 4 7 4Z" fill="none" stroke="#363636" stroke-width="7" stroke-linejoin="round"/><path d="M34 4V27H57" fill="none" stroke="#363636" stroke-width="6"/><path d="M23 43L13 52L23 61M38 43L48 52L38 61M34 37L27 67" fill="none" stroke="#363636" stroke-width="5.500"/></svg>
<div style="left:1456.5px;top:407px;font-size:15px;color:#727272;line-height:20px;white-space:nowrap;letter-spacing:0.150px">Please select an edit target.</div>
<svg class="a" style="left:1647px;top:409.5px;" width="15" height="15" viewBox="0 0 15 15"><path d="M8 1.500L13.500 7L11 8L9.500 6.500L2 14L1 13L8.500 5.500L7 4Z" fill="#8a8a8a"/><path d="M7 3.500L11.500 8" stroke="#8a8a8a" stroke-width="3.500"/></svg>
<div style="left:552px;top:653.7px;width:1344px;height:30.3px;background:#000"></div>
<div class="tab" style="left:552px;top:655px;width:135.5px;height:29px;"></div>
<div class="tabic" style="left:562.3px;top:668.1px;width:11.7px;height:13px;"></div>
<div style="left:580.5px;top:665.5px;font-size:13px;color:#ccc;line-height:16px;white-space:nowrap;letter-spacing:0.2px">Interactive Shell</div>
<div class="maxi" style="left:1879.5px;top:664.5px;width:9px;height:9px;"></div>
<div class="panel" style="left:552px;top:684px;width:1344px;height:227px;"></div>
<pre style="left:572px;top:690.500px;font-size:13px;line-height:18.900px;color:#e0e0e0">...Connecting To : 10.98.53.222:9000(10.98.53.222:9000)
Qmonus-SDK v23.2LTS-patch20250519 [scenario-6bd5755f56-7xn75(10.98.53.222)]
2025-07-23T15:22:03.566748+09:00
Type "copyright", "help", "commands"
&gt;&gt;&gt;</pre>
<div style="left:1896px;top:52.8px;width:22px;height:862.2px;background:#2a2d33;overflow:hidden"><svg class="a" style="left:0;top:1.7px" width="22" height="857" viewBox="0 0 22 857"><g fill="#1b1c1f"><path d="M0 22L7 26L9 36L2 34L0 30Z"/><path d="M0 82L4 90L7 132L3 136L0 128Z"/><path d="M0 170L9 243L8 300L4 332L0 335Z"/><path d="M0 368L6 372L14 395L7 425L0 428Z"/><path d="M0 448L8 462L12 475L5 486L0 484Z"/></g></svg></div>
<svg class="a" style="left:1900.5px;top:62.5px;" width="17" height="17" viewBox="0 0 17 17"><circle cx="8.500" cy="8.500" r="8.200" fill="#fff"/><circle cx="8.500" cy="4.600" r="1.400" fill="#222"/><path d="M6.700 7.200H9.700V12H10.600V13.300H6.500V12H7.500V8.500H6.700Z" fill="#222"/></svg>
<div style="left:1921px;top:91px;transform-origin:0 0;transform:rotate(90deg);font-size:20px;line-height:24px;color:#fff;white-space:nowrap">Dag Editor</div>
<div style="left:1915px;top:200px;transform-origin:0 0;transform:rotate(90deg);font-size:11.5px;line-height:13px;color:#73787e;white-space:nowrap;letter-spacing:0.350px">workflow model that distributes execution in an appropriate order</div>
<div style="left:0px;top:910.6px;width:1918px;height:4.9px;background:#0b0b0b"></div>
<div style="left:0px;top:915px;width:1918px;height:21px;background:#1976d2;border-radius:0 0 9px 9px;border-top:1px solid #2b88e6"></div>
<svg class="a" style="left:19px;top:920.7px;" width="11" height="11" viewBox="0 0 11 11"><circle cx="4" cy="5.500" r="2.600" fill="none" stroke="#fff" stroke-width="1.800"/><circle cx="8.800" cy="3" r="1.100" fill="#fff"/><circle cx="8.800" cy="8.300" r="1.100" fill="#fff"/></svg>
<div class="st" style="left:35px;top:915px;"><span style="font-size:8px;opacity:.8">&#9636; /</span></div>
<svg class="a" style="left:52.8px;top:921.2px;" width="10" height="10" viewBox="0 0 12 12"><circle cx="6" cy="6" r="5.500" fill="#fff"/><path d="M3.800 3.800L8.200 8.200M8.200 3.800L3.800 8.200" stroke="#1976d2" stroke-width="1.600"/></svg>
<div class="st" style="left:65px;top:915px;font-size:11px">0</div>
<svg class="a" style="left:78.5px;top:921px;" width="11.2" height="10.3" viewBox="0 0 13 12"><path d="M6.500 0.500L12.600 11.500H0.400Z" fill="#fff"/><path d="M6.500 4.200V8" stroke="#1976d2" stroke-width="1.400"/><circle cx="6.500" cy="9.700" r="0.800" fill="#1976d2"/></svg>
<div class="st" style="left:91.5px;top:915px;font-size:11px">0</div>
<svg class="a" style="left:106.5px;top:920.8px;" width="6.5" height="10.5" viewBox="0 0 7 11"><rect x="0.500" y="1.500" width="6" height="9" rx="1" fill="#fff"/><rect x="2" y="0" width="3" height="2" fill="#fff"/></svg>
<div class="st" style="left:114px;top:915px;font-size:9px;font-weight:normal;letter-spacing:0.6px;color:#9cc6f0">97 % ( 3 % )</div>
<div class="st" style="left:180.5px;top:915px;letter-spacing:0.1px">taisei.awaji@w.ntt.com</div>
<div class="st" style="left:326px;top:915px;">on</div>
<div class="st" style="left:352.3px;top:915px;letter-spacing:0.150px">awaji_tutorial</div>
<div class="st" style="left:459px;top:915px;"><span style="font-size:8px;color:#9cc6f0">&#8364;</span></div>
<svg class="a" style="left:479.3px;top:922.5px;" width="6.5" height="7.3" viewBox="0 0 8 9"><path d="M0.500 0.500H7.500V5L4 8.500L0.500 5Z" fill="none" stroke="#b8d8f6" stroke-width="1.200"/></svg>
<div class="st" style="left:1629.8px;top:915px;letter-spacing:0.150px">Copyright</div>
<div class="st" style="left:1690.3px;top:915px;"><span style="font-size:6.5px">&#169;</span></div>
<div class="st" style="left:1700.8px;top:915px;letter-spacing:1px">2015-2025</div>
<div class="st" style="left:1773.4px;top:915px;">NTT</div>
<div class="st" style="left:1801.9px;top:915px;letter-spacing:0.200px">Communications</div>
<div style="left:346.5px;top:515px;width:204.8px;height:124.7px;background:#3c4249;box-shadow:0 3px 8px rgba(0,0,0,.5)"></div>
<div style="left:346.5px;top:578.5px;width:204.5px;height:1px;background:#2b2f33"></div>
<div style="left:346.5px;top:579.5px;width:204.5px;height:1px;background:#43484e"></div>
<svg class="a" style="left:365.5px;top:524px;" width="13" height="13" viewBox="0 0 13 13"><path d="M6.500 0.500V12.500M0.500 6.500H12.500" stroke="#fff" stroke-width="2.800"/></svg>
<div class="mi" style="left:384.5px;top:520.5px;letter-spacing:0.280px">Create New Function</div>
<svg class="a" style="left:365.5px;top:549.5px;" width="13" height="13" viewBox="0 0 13 13"><path d="M6.500 0.500V12.500M0.500 6.500H12.500" stroke="#fff" stroke-width="2.800"/></svg>
<div class="mi" style="left:384.5px;top:546px;letter-spacing:0.280px">Create New Module</div>
<svg class="a" style="left:365.5px;top:594px;" width="14" height="14" viewBox="0 0 14 14"><circle cx="7" cy="7" r="5.900" fill="none" stroke="#fff" stroke-width="1.600"/><path d="M7 3.500V10M4.200 7.500L7 10.400L9.800 7.500" fill="none" stroke="#fff" stroke-width="1.900"/></svg>
<div class="mi" style="left:384.5px;top:591px;letter-spacing:0.280px">Download Builtins</div>
<svg class="a" style="left:365.5px;top:620px;" width="14" height="14" viewBox="0 0 14 14"><circle cx="7" cy="7" r="5.900" fill="none" stroke="#fff" stroke-width="1.600"/><path d="M7 10.500V4M4.200 6.500L7 3.600L9.800 6.500" fill="none" stroke="#fff" stroke-width="1.900"/></svg>
<div class="mi" style="left:384.5px;top:617px;letter-spacing:0.280px">Import Buitins</div>
<div style="left:337.3px;top:515.1px;width:224.3px;height:34.6px;border:9.700px solid #fe0000;background:transparent"></div>
<div class="bw" style="left:0px;top:0px;width:1920px;height:2px;"></div>
<div class="bw" style="left:1918px;top:0px;width:2px;height:936px;"></div>
</div>
</body>
</html>
